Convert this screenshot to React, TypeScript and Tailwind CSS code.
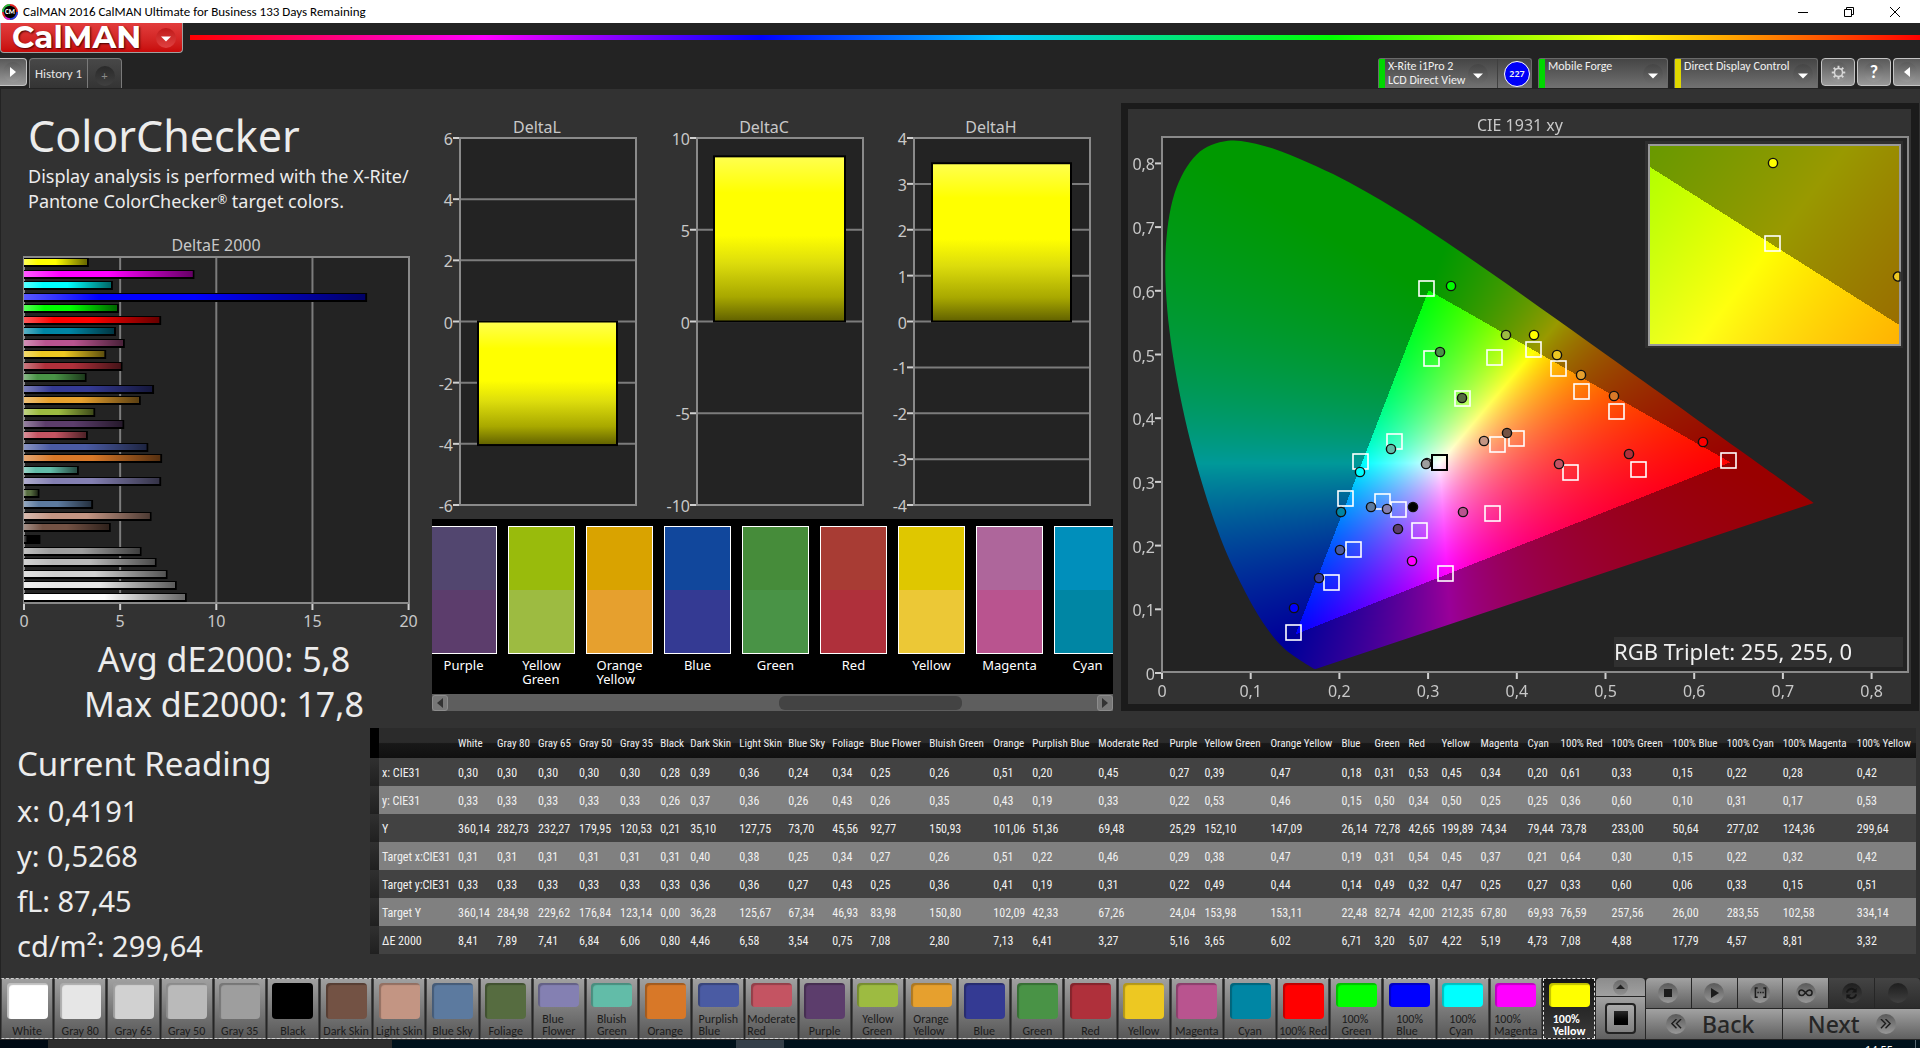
import React, { useEffect, useRef } from "react";

type Swatch = { name: string; color: string; values: string[] };

const ROW_LABELS = ["x: CIE31", "y: CIE31", "Y", "Target x:CIE31", "Target y:CIE31", "Target Y", "ΔE 2000"];

const SWATCHES: Swatch[] = [
  { name: "White", color: "#ffffff", values: ["0,30", "0,33", "360,14", "0,31", "0,33", "360,14", "8,41"] },
  { name: "Gray 80", color: "#e6e6e6", values: ["0,30", "0,33", "282,73", "0,31", "0,33", "284,98", "7,89"] },
  { name: "Gray 65", color: "#d1d1d1", values: ["0,30", "0,33", "232,27", "0,31", "0,33", "229,62", "7,41"] },
  { name: "Gray 50", color: "#bababa", values: ["0,30", "0,33", "179,95", "0,31", "0,33", "176,84", "6,84"] },
  { name: "Gray 35", color: "#9e9e9e", values: ["0,30", "0,33", "120,53", "0,31", "0,33", "123,14", "6,06"] },
  { name: "Black", color: "#000000", values: ["0,28", "0,26", "0,21", "0,31", "0,33", "0,00", "0,80"] },
  { name: "Dark Skin", color: "#735244", values: ["0,39", "0,37", "35,10", "0,40", "0,36", "36,28", "4,46"] },
  { name: "Light Skin", color: "#c39583", values: ["0,36", "0,36", "127,75", "0,38", "0,36", "125,67", "6,58"] },
  { name: "Blue Sky", color: "#5c7a9f", values: ["0,24", "0,26", "73,70", "0,25", "0,27", "67,34", "3,54"] },
  { name: "Foliage", color: "#566c40", values: ["0,34", "0,43", "45,56", "0,34", "0,43", "46,93", "0,75"] },
  { name: "Blue Flower", color: "#8480b2", values: ["0,25", "0,26", "92,77", "0,27", "0,25", "83,98", "7,08"] },
  { name: "Bluish Green", color: "#62bca8", values: ["0,26", "0,35", "150,93", "0,26", "0,36", "150,80", "2,80"] },
  { name: "Orange", color: "#d87828", values: ["0,51", "0,43", "101,06", "0,51", "0,41", "102,09", "7,13"] },
  { name: "Purplish Blue", color: "#4a5ba3", values: ["0,20", "0,19", "51,36", "0,22", "0,19", "42,33", "6,41"] },
  { name: "Moderate Red", color: "#c45462", values: ["0,45", "0,33", "69,48", "0,46", "0,31", "67,26", "3,27"] },
  { name: "Purple", color: "#5c3d6c", values: ["0,27", "0,22", "25,29", "0,29", "0,22", "24,04", "5,16"] },
  { name: "Yellow Green", color: "#9dbb41", values: ["0,39", "0,53", "152,10", "0,38", "0,49", "153,98", "3,65"] },
  { name: "Orange Yellow", color: "#e6a02e", values: ["0,47", "0,46", "147,09", "0,47", "0,44", "153,11", "6,02"] },
  { name: "Blue", color: "#343a93", values: ["0,18", "0,15", "26,14", "0,19", "0,14", "22,48", "6,71"] },
  { name: "Green", color: "#499346", values: ["0,31", "0,50", "72,78", "0,31", "0,49", "82,74", "3,20"] },
  { name: "Red", color: "#af303b", values: ["0,53", "0,34", "42,65", "0,54", "0,32", "42,00", "5,07"] },
  { name: "Yellow", color: "#edc822", values: ["0,45", "0,50", "199,89", "0,45", "0,47", "212,35", "4,22"] },
  { name: "Magenta", color: "#b9548f", values: ["0,34", "0,25", "74,34", "0,37", "0,25", "67,80", "5,19"] },
  { name: "Cyan", color: "#0086a4", values: ["0,20", "0,25", "79,44", "0,21", "0,27", "69,93", "4,73"] },
  { name: "100% Red", color: "#ff0000", values: ["0,61", "0,36", "73,78", "0,64", "0,33", "76,59", "7,08"] },
  { name: "100% Green", color: "#00ff00", values: ["0,33", "0,60", "233,00", "0,30", "0,60", "257,56", "4,88"] },
  { name: "100% Blue", color: "#0000ff", values: ["0,15", "0,10", "50,64", "0,15", "0,06", "26,00", "17,79"] },
  { name: "100% Cyan", color: "#00ffff", values: ["0,22", "0,31", "277,02", "0,22", "0,33", "283,55", "4,57"] },
  { name: "100% Magenta", color: "#ff00ff", values: ["0,28", "0,17", "124,36", "0,32", "0,15", "102,58", "8,81"] },
  { name: "100% Yellow", color: "#ffff00", values: ["0,42", "0,53", "299,64", "0,42", "0,51", "334,14", "3,32"] },
];

const COLUMN_WIDTHS = [
  39, 41, 41, 41, 40, 30, 49, 49, 44, 38, 59, 64, 39, 66, 71, 35, 66, 71, 33, 34, 33, 39, 47, 33, 51, 61, 54, 56, 74, 62,
];

const TWO_LINE = new Set([
  "Blue Flower", "Bluish Green", "Purplish Blue", "Moderate Red", "Yellow Green", "Orange Yellow",
  "100% Green", "100% Blue", "100% Cyan", "100% Magenta", "100% Yellow",
]);

const PATCHES = [
  { lines: ["Purple"], top: "#52466f", bottom: "#5c3d6c" },
  { lines: ["Yellow", "Green"], top: "#99bb0c", bottom: "#9dbb41" },
  { lines: ["Orange", "Yellow"], top: "#d9a300", bottom: "#e6a02e" },
  { lines: ["Blue"], top: "#11479c", bottom: "#343a93" },
  { lines: ["Green"], top: "#468c3a", bottom: "#499346" },
  { lines: ["Red"], top: "#a83c34", bottom: "#af303b" },
  { lines: ["Yellow"], top: "#dfc700", bottom: "#ecc836" },
  { lines: ["Magenta"], top: "#ae669b", bottom: "#b9548f" },
  { lines: ["Cyan"], top: "#008fbb", bottom: "#0086a4" },
];

const AXIS = "fill-[#c8c8c8] text-[16px]";

function DeltaEChart() {
  const x = (v: number) => 24 + v * 19.23;
  const bars = [...SWATCHES].reverse();
  return (
    <svg viewBox="0 232 430 400" className="mt-[18px] block w-full" role="img" aria-label="DeltaE 2000">
      <defs>
        <linearGradient id="shadeH">
          <stop offset="0" stopColor="#fff" stopOpacity=".35" />
          <stop offset=".22" stopColor="#fff" stopOpacity="0" />
          <stop offset=".5" stopColor="#000" stopOpacity="0" />
          <stop offset="1" stopColor="#000" stopOpacity=".6" />
        </linearGradient>
      </defs>
      <text x="216" y="251" textAnchor="middle" className={AXIS}>DeltaE 2000</text>
      <rect x="24" y="257" width="385" height="346" fill="#232323" stroke="#8a8a8a" strokeWidth="2" />
      {[5, 10, 15].map((v) => (
        <line key={v} x1={x(v)} x2={x(v)} y1="258" y2="602" stroke="#7c7c7c" strokeWidth="2" />
      ))}
      {bars.map((s, i) => {
        const w = parseFloat(s.values[6].replace(",", ".")) * 19.23;
        const y = 258 + i * 11.54;
        return (
          <g key={s.name}>
            <rect x="24" y={Math.round(y)} width={w + 1} height="9" fill="#000" />
            <rect x="24" y={Math.round(y) + 1} width={Math.max(w - 1, 1)} height="6" fill={s.color} />
            <rect x="24" y={Math.round(y) + 1} width={Math.max(w - 1, 1)} height="6" fill="url(#shadeH)" />
          </g>
        );
      })}
      {[0, 5, 10, 15, 20].map((v) => (
        <g key={v}>
          <line x1={x(v)} x2={x(v)} y1="604" y2="610" stroke="#d0d0d0" strokeWidth="2" />
          <text x={x(v)} y="627" textAnchor="middle" className={AXIS}>{v}</text>
        </g>
      ))}
    </svg>
  );
}

type DeltaProps = {
  title: string; viewX: number; viewW: number; titleX: number; left: number; right: number;
  min: number; max: number; step: number; value: number; barLeft: number; barRight: number;
};

function DeltaChart(p: DeltaProps) {
  const y = (v: number) => 138 + ((p.max - v) / (p.max - p.min)) * 367;
  const ticks: number[] = [];
  for (let v = p.max; v >= p.min; v -= p.step) ticks.push(v);
  const top = y(Math.max(p.value, 0));
  const bottom = y(Math.min(p.value, 0));
  const id = `shade-${p.title}`;
  return (
    <svg viewBox={`${p.viewX} 110 ${p.viewW} 409`} className="block w-full" role="img" aria-label={p.title}>
      <defs>
        <linearGradient id={id} x1="0" x2="0" y1="0" y2="1">
          <stop offset="0" stopColor="#ffff50" />
          <stop offset=".22" stopColor="#ffff00" />
          <stop offset=".48" stopColor="#ffff00" />
          <stop offset=".65" stopColor="#dcdc0c" />
          <stop offset=".85" stopColor="#a8a800" />
          <stop offset="1" stopColor="#606000" />
        </linearGradient>
      </defs>
      <text x={p.titleX} y="133" textAnchor="middle" className={AXIS}>{p.title}</text>
      <rect x={p.left} y="138" width={p.right - p.left} height="367" fill="#232323" />
      {ticks.map((v) => (
        <g key={v}>
          <line x1={p.left} x2={p.right} y1={y(v)} y2={y(v)} stroke="#7c7c7c" strokeWidth="2" />
          <line x1={p.left - 7} x2={p.left} y1={y(v)} y2={y(v)} stroke="#d0d0d0" strokeWidth="2" />
          <text x={p.left - 7} y={y(v) + 7} textAnchor="end" className={AXIS}>{v}</text>
        </g>
      ))}
      <rect x={p.left} y="138" width={p.right - p.left} height="367" fill="none" stroke="#8a8a8a" strokeWidth="2" />
      <rect x={p.barLeft} y={top} width={p.barRight - p.barLeft} height={bottom - top} fill={`url(#${id})`} stroke="#000" strokeWidth="2" />
    </svg>
  );
}

const LOCUS: [number, number][] = [
  [0.1741, 0.005], [0.1733, 0.0048], [0.1714, 0.0051], [0.1689, 0.0069], [0.1644, 0.0109], [0.1566, 0.0177],
  [0.144, 0.0297], [0.1355, 0.0399], [0.1241, 0.0578], [0.1096, 0.0868], [0.0913, 0.1327], [0.0687, 0.2007],
  [0.0454, 0.295], [0.0235, 0.4127], [0.0082, 0.5384], [0.0039, 0.6548], [0.0139, 0.7502], [0.0389, 0.812],
  [0.0743, 0.8338], [0.1142, 0.8262], [0.1547, 0.8059], [0.1929, 0.7816], [0.2296, 0.7543], [0.2658, 0.7243],
  [0.3016, 0.6923], [0.3373, 0.6589], [0.3731, 0.6245], [0.4087, 0.5896], [0.4441, 0.5547], [0.4788, 0.5202],
  [0.5125, 0.4866], [0.5448, 0.4544], [0.5752, 0.4242], [0.6029, 0.3965], [0.627, 0.3725], [0.6658, 0.334],
  [0.6915, 0.3083], [0.719, 0.2809], [0.7347, 0.2653],
];

const GAMUT: [number, number][] = [[0.64, 0.33], [0.3, 0.6], [0.15, 0.06]];

function insideGamut(x: number, y: number) {
  const side = (a: [number, number], b: [number, number]) =>
    (b[0] - a[0]) * (y - a[1]) - (b[1] - a[1]) * (x - a[0]);
  return side(GAMUT[0], GAMUT[1]) >= 0 && side(GAMUT[1], GAMUT[2]) >= 0 && side(GAMUT[2], GAMUT[0]) >= 0;
}

function chromaColor(x: number, y: number): [number, number, number] {
  const yy = Math.max(y, 0.0001);
  const X = x / yy;
  const Z = (1 - x - yy) / yy;
  const r = Math.max(3.2406 * X - 1.5372 - 0.4986 * Z, 0);
  const g = Math.max(-0.9689 * X + 1.8758 + 0.0415 * Z, 0);
  const b = Math.max(0.0557 * X - 0.204 + 1.057 * Z, 0);
  const k = (insideGamut(x, y) ? 255 : 153) / (Math.max(r, g, b) || 1);
  return [r * k, g * k, b * k];
}

function paintChroma(w: number, h: number, toXY: (px: number, py: number) => [number, number]) {
  const c = document.createElement("canvas");
  c.width = w;
  c.height = h;
  const ctx = c.getContext("2d")!;
  const img = ctx.createImageData(w, h);
  for (let j = 0; j < h; j++) {
    for (let i = 0; i < w; i++) {
      const [x, y] = toXY(i, j);
      const [r, g, b] = chromaColor(x, y);
      const o = (j * w + i) * 4;
      img.data[o] = r;
      img.data[o + 1] = g;
      img.data[o + 2] = b;
      img.data[o + 3] = 255;
    }
  }
  ctx.putImageData(img, 0, 0);
  return c;
}

const TARGETS = [
  [1427, 289], [1432, 359], [1495, 358], [1534, 350], [1463, 399], [1395, 442], [1498, 445], [1517, 439],
  [1361, 462], [1346, 499], [1383, 502], [1399, 510], [1420, 531], [1493, 514], [1354, 550], [1332, 583],
  [1446, 574], [1294, 633], [1559, 369], [1582, 392], [1617, 412], [1571, 473], [1639, 470], [1729, 461],
];

const READINGS: [number, number, string][] = [
  [1451, 286, "#00ff00"], [1506, 335, "#9dbb41"], [1534, 335, "#ffff00"], [1440, 352, "#499346"],
  [1462, 398, "#566c40"], [1507, 433, "#735244"], [1484, 441, "#c39583"], [1391, 449, "#62bca8"],
  [1427, 463, "#e6e6e6"], [1426, 464, "#9e9e9e"], [1360, 472, "#00ffff"], [1341, 512, "#0086a4"],
  [1371, 507, "#5c7a9f"], [1387, 509, "#8480b2"], [1413, 507, "#000000"], [1398, 529, "#5c3d6c"],
  [1463, 512, "#b9548f"], [1340, 550, "#4a5ba3"], [1412, 561, "#ff00ff"], [1319, 578, "#343a93"],
  [1294, 608, "#0000ff"], [1557, 355, "#edc822"], [1581, 375, "#e6a02e"], [1614, 396, "#d87828"],
  [1629, 454, "#af303b"], [1559, 464, "#c15263"], [1703, 442, "#ff0000"],
];

function CieChart() {
  const ref = useRef<HTMLCanvasElement>(null);
  useEffect(() => {
    const ctx = ref.current!.getContext("2d")!;
    const px = (x: number) => 34 + x * 887;
    const py = (y: number) => 563 - y * 637;
    ctx.clearRect(0, 0, 783, 595);
    ctx.fillStyle = "#232323";
    ctx.fillRect(34, 28, 746, 535);
    ctx.save();
    ctx.beginPath();
    ctx.moveTo(px(LOCUS[0][0]), py(LOCUS[0][1]));
    for (let i = 0; i < LOCUS.length - 1; i++) {
      const p0 = LOCUS[Math.max(i - 1, 0)];
      const p1 = LOCUS[i];
      const p2 = LOCUS[i + 1];
      const p3 = LOCUS[Math.min(i + 2, LOCUS.length - 1)];
      ctx.bezierCurveTo(
        px(p1[0] + (p2[0] - p0[0]) / 6), py(p1[1] + (p2[1] - p0[1]) / 6),
        px(p2[0] - (p3[0] - p1[0]) / 6), py(p2[1] - (p3[1] - p1[1]) / 6),
        px(p2[0]), py(p2[1]),
      );
    }
    ctx.closePath();
    ctx.clip();
    ctx.drawImage(paintChroma(783, 595, (i, j) => [(i - 34) / 887, (563 - j) / 637]), 0, 0);
    ctx.restore();
    ctx.fillStyle = "#2e2e2e";
    ctx.fillRect(517, 32, 258, 207);
    ctx.drawImage(
      paintChroma(251, 200, (i, j) => [0.4193 + (i - 123) / 4750, 0.5053 + (99 - j) / 3790]), 521, 36);
  }, []);

  return (
    <div className="relative bg-[#323232]">
      <canvas ref={ref} width={783} height={595} className="absolute inset-0 h-full w-full" />
      <svg viewBox="1128 109 783 595" className="relative block w-full" role="img" aria-label="CIE 1931 xy">
        <text x="1520" y="131" textAnchor="middle" className={AXIS}>CIE 1931 xy</text>
        <rect x="1162" y="137" width="746" height="535" fill="none" stroke="#8a8a8a" strokeWidth="2" />
        {[0, 1, 2, 3, 4, 5, 6, 7, 8].map((n) => (
          <g key={n}>
            <line x1="1155" x2="1161" y1={673 - n * 63.7} y2={673 - n * 63.7} stroke="#d0d0d0" strokeWidth="2" />
            <text x="1155" y={680 - n * 63.7} textAnchor="end" className={AXIS}>{n ? `0,${n}` : "0"}</text>
            <line x1={1162 + n * 88.7} x2={1162 + n * 88.7} y1="673" y2="679" stroke="#d0d0d0" strokeWidth="2" />
            <text x={1162 + n * 88.7} y="697" textAnchor="middle" className={AXIS}>{n ? `0,${n}` : "0"}</text>
          </g>
        ))}
        {TARGETS.map(([x, y]) => (
          <rect key={`${x}-${y}`} x={x - 8} y={y - 8} width="15" height="15" fill="none" stroke="#fff" strokeWidth="1.6" />
        ))}
        {READINGS.map(([x, y, c]) => (
          <circle key={`${x}-${y}`} cx={x} cy={y} r="4.6" fill={c} stroke="#101010" strokeWidth="1.4" />
        ))}
        <rect x="1432" y="455" width="15" height="15" fill="none" stroke="#000" strokeWidth="2" />
        <rect x="1649" y="145" width="251" height="200" fill="none" stroke="#999" strokeWidth="2" />
        <circle cx="1773" cy="163" r="4.6" fill="#ffff00" stroke="#101010" strokeWidth="1.4" />
        <rect x="1765" y="236" width="15" height="15" fill="none" stroke="#fff" strokeWidth="1.6" />
        <path d="M1900 272.4A4.6 4.6 0 1 0 1900 280.6Z" fill="#edc822" stroke="#101010" strokeWidth="1.4" />
        <rect x="1614" y="637" width="289" height="30" fill="#303030" />
        <text x="1614" y="660" className="fill-[#f0f0f0] text-[22px]">RGB Triplet: 255, 255, 0</text>
      </svg>
    </div>
  );
}

function RoundGlyph({ children, dark = false }: { children?: React.ReactNode; dark?: boolean }) {
  return (
    <span
      className={
        dark
          ? "flex size-5 shrink-0 items-center justify-center rounded-full bg-linear-to-b from-[#1e1e1e] to-[#404040]"
          : "flex size-5 shrink-0 items-center justify-center rounded-full bg-linear-to-b from-[#5a5a5a] to-[#989898]"
      }
    >
      {children}
    </span>
  );
}

function DropArrow() {
  return (
    <span className="flex size-5 shrink-0 items-center justify-center rounded-full bg-linear-to-b from-[#454545] to-[#6b6b6b]">
      <svg viewBox="0 0 10 6" className="mt-1 w-[10px]"><path d="M0 .5h10L5 5.5z" fill="#fff" /></svg>
    </span>
  );
}

const PANEL =
  "flex h-[30px] rounded-t-[3px] border-x border-t border-[#6a6a6a] bg-linear-to-b from-[#454545] to-[#727272] text-left text-[12px] leading-[14px] text-[#f0f0f0]";
const TOOL =
  "flex h-[28px] items-center justify-center rounded-[4px] border border-[#c4c4c4] bg-linear-to-b from-[#5a5a5a] to-[#9a9a9a]";
const KEY = "flex items-center justify-center bg-linear-to-b from-[#a2a2a2] to-[#606060]";

export default function App() {
  return (
    <div className="flex min-h-screen flex-col overflow-hidden bg-[#323232] font-['Noto_Sans',sans-serif] text-[#ececec]">
      <header className="bg-[#232323]">
        <div className="flex h-[23px] items-center bg-white pr-0.5 pl-0.5 font-[Carlito,Lato,sans-serif] text-[13px] text-black">
          <svg viewBox="0 0 16 16" className="mr-[5px] size-4">
            <circle cx="8" cy="8" r="7" fill="none" stroke="#e02020" strokeWidth="2" />
            <path d="M8 1a7 7 0 0 0-7 7" fill="none" stroke="#20c040" strokeWidth="2" />
            <path d="M8 15a7 7 0 0 0 7-7" fill="none" stroke="#2040e0" strokeWidth="2" />
            <path d="M8 15a7 7 0 0 1-5-2" fill="none" stroke="#d020d0" strokeWidth="2" />
            <circle cx="8" cy="8" r="6.2" fill="#000" />
            <text x="8" y="10.4" textAnchor="middle" className="fill-white text-[7px] font-bold">CM</text>
          </svg>
          <span className="flex-1">CalMAN 2016 CalMAN Ultimate for Business 133 Days Remaining</span>
          <button aria-label="Minimize" className="flex w-[46px] justify-center">
            <svg viewBox="0 0 10 10" className="size-[10px]"><path d="M0 5.5h10" stroke="#000" /></svg>
          </button>
          <button aria-label="Restore" className="flex w-[46px] justify-center">
            <svg viewBox="0 0 10 10" className="size-[10px]"><path d="M.5 2.5h7v7h-7zM2.5 2.5V.5h7v7h-2" fill="none" stroke="#000" /></svg>
          </button>
          <button aria-label="Close" className="flex w-[46px] justify-center">
            <svg viewBox="0 0 10 10" className="size-[10px]"><path d="M0 0l10 10M10 0L0 10" stroke="#000" /></svg>
          </button>
        </div>

        <div className="flex items-start">
          <button className="flex h-[30px] w-[183px] shrink-0 items-center justify-between rounded-b-[4px] border-x border-b border-[#a0a0a0] bg-linear-to-b from-[#e23c3c] to-[#c80808] pr-1.5 pl-[11px] font-[Montserrat,Lato,sans-serif] text-[31px] leading-none font-bold text-white [text-shadow:1px_1px_2px_#400]">
            CalMAN
            <span className="flex size-5 items-center justify-center rounded-full bg-linear-to-b from-[#c01818] to-[#e04040]">
              <svg viewBox="0 0 10 6" className="mt-0.5 w-[10px]"><path d="M0 .5h10L5 5.5z" fill="#fff" /></svg>
            </span>
          </button>
          <div className="mt-3 ml-[7px] h-[5px] flex-1 bg-[linear-gradient(90deg,#f00,#f0f_17%,#00f_33%,#00c8ff_47%,#0f0_66%,#ff0_83%,#f00)]" />
        </div>

        <div className="flex items-start pt-[5px] pb-px font-[Carlito,Lato,sans-serif]">
          <button aria-label="Open panel" className="flex h-[28px] w-[27px] items-center justify-center rounded-r-[4px] border-y border-r border-[#c4c4c4] bg-linear-to-b from-[#5a5a5a] to-[#9a9a9a]">
            <RoundGlyph><svg viewBox="0 0 6 10" className="h-[10px]"><path d="M0 0l6 5-6 5z" fill="#fff" /></svg></RoundGlyph>
          </button>
          <nav className="ml-[2px] flex h-[30px] rounded-t-[4px] border-x border-t border-[#7a7a7a] bg-linear-to-b from-[#484848] to-[#343434]">
            <button className="w-[58px] border-r border-[#7a7a7a] text-[13px] text-[#e4e4e4]">History 1</button>
            <button aria-label="Add" className="flex w-[33px] items-center justify-center pt-1">
              <span className="flex size-5 items-center justify-center rounded-full bg-linear-to-b from-[#2a2a2a] to-[#404040] text-[12px] leading-none text-[#8a8a8a]">+</span>
            </button>
          </nav>
          <div className="flex-1" />
          <button className={`${PANEL} w-[154px]`}>
            <span className="h-full w-[6px] bg-[#00d800]" />
            <span className="h-full flex-1 pl-[3px] whitespace-nowrap">X-Rite i1Pro 2<br />LCD Direct View</span>
            <span className="flex h-full items-center border-r border-[#404040] pr-[9px]"><DropArrow /></span>
            <span className="flex h-full items-center pr-px pl-[6px]">
              <span className="flex size-[26px] items-center justify-center rounded-full border border-white bg-[#0000f8] font-['Noto_Sans',sans-serif] text-[9px] font-semibold">227</span>
            </span>
          </button>
          <button className={`${PANEL} ml-[6px] w-[130px]`}>
            <span className="h-full w-[6px] bg-[#00d800]" />
            <span className="flex-1 pl-[3px]">Mobile Forge</span>
            <span className="flex h-full items-center pr-1"><DropArrow /></span>
          </button>
          <button className={`${PANEL} ml-[6px] w-[144px]`}>
            <span className="h-full w-[6px] bg-[#e0d800]" />
            <span className="flex-1 pl-[3px] whitespace-nowrap">Direct Display Control</span>
            <span className="flex h-full items-center pr-1"><DropArrow /></span>
          </button>
          <button aria-label="Settings" className={`${TOOL} ml-[3px] w-[34px]`}>
            <RoundGlyph>
              <svg viewBox="-8 -8 16 16" className="size-[15px]" fill="none" stroke="#d8d8d8">
                <circle r="4.3" strokeWidth="1.6" />
                {[0, 45, 90, 135, 180, 225, 270, 315].map((a) => (
                  <path key={a} d="M0-4.8V-7.2" strokeWidth="2" transform={`rotate(${a})`} />
                ))}
              </svg>
            </RoundGlyph>
          </button>
          <button aria-label="Help" className={`${TOOL} ml-[2px] w-[34px] text-[18px] leading-none font-bold text-white`}>
            <RoundGlyph>?</RoundGlyph>
          </button>
          <button aria-label="Collapse" className="ml-[2px] flex h-[28px] w-[27px] items-center justify-center rounded-l-[4px] border-y border-l border-[#c4c4c4] bg-linear-to-b from-[#5a5a5a] to-[#9a9a9a]">
            <RoundGlyph><svg viewBox="0 0 6 10" className="h-[10px]"><path d="M6 0L0 5l6 5z" fill="#fff" /></svg></RoundGlyph>
          </button>
        </div>
      </header>

      <main className="flex-1 border-l border-[#232323]">
        <div className="-ml-px grid grid-cols-[minmax(0,430fr)_minmax(0,690fr)_minmax(0,800fr)] items-start">
          <section>
            <div className="pt-[22px] pl-7">
              <h1 className="text-[43px] leading-[50px]">ColorChecker</h1>
              <p className="mt-[3px] text-[18px] leading-[25px] whitespace-nowrap">
                Display analysis is performed with the X-Rite/<br />
                Pantone ColorChecker<span className="align-[4px] text-[12px] leading-none">®</span> target colors.
              </p>
            </div>
            <DeltaEChart />
            <p className="mt-[5px] pb-px pl-[18px] text-center text-[34px] leading-[45px]">
              Avg dE2000: 5,8<br />Max dE2000: 17,8
            </p>
          </section>

          <section className="pt-[21px]">
            <div className="grid grid-cols-[210fr_230fr_250fr]">
              <DeltaChart title="DeltaL" viewX={430} viewW={210} titleX={537} left={460} right={636} min={-6} max={6} step={2} value={-4.04} barLeft={478} barRight={617} />
              <DeltaChart title="DeltaC" viewX={640} viewW={230} titleX={764} left={697} right={863} min={-10} max={10} step={5} value={9} barLeft={714} barRight={845} />
              <DeltaChart title="DeltaH" viewX={870} viewW={250} titleX={991} left={914} right={1090} min={-4} max={4} step={1} value={3.45} barLeft={932} barRight={1071} />
            </div>
            <div className="mr-[7px] ml-[2px]">
              <div className="h-[175px] overflow-hidden bg-black pt-[7px]">
                <div className="-ml-0.5 flex gap-[11px]">
                  {PATCHES.map((p) => (
                    <figure key={p.lines.join()} className="w-[67px] shrink-0">
                      <div className="h-[128px] border border-white">
                        <div className="h-1/2" style={{ backgroundColor: p.top }} />
                        <div className="h-1/2" style={{ backgroundColor: p.bottom }} />
                      </div>
                      <figcaption className="flex justify-center pt-[4px] text-[13px] leading-[14px] text-white">
                        <span>{p.lines[0]}{p.lines[1] && <><br />{p.lines[1]}</>}</span>
                      </figcaption>
                    </figure>
                  ))}
                </div>
              </div>
              <div className="flex h-[17px] items-center bg-[#5e5e5e]">
                <button aria-label="Scroll left" className="flex size-4 items-center justify-center rounded-[3px] border border-[#8c8c8c] bg-[#777]">
                  <svg viewBox="0 0 6 10" className="h-[10px]"><path d="M6 0L0 5l6 5z" fill="#333" /></svg>
                </button>
                <div className="grid flex-1 grid-cols-[329fr_183fr_134fr]">
                  <div className="col-start-2 h-[14px] rounded-[6px] bg-[#434343]" />
                </div>
                <button aria-label="Scroll right" className="flex size-4 items-center justify-center rounded-[3px] border border-[#8c8c8c] bg-[#777]">
                  <svg viewBox="0 0 6 10" className="h-[10px]"><path d="M0 0l6 5-6 5z" fill="#333" /></svg>
                </button>
              </div>
            </div>
          </section>

          <section className="mx-px mt-[14px] bg-[#1b1b1b] pt-[6px] pr-[8px] pb-[7px] pl-[7px]">
            <CieChart />
          </section>
        </div>

        <div className="flex items-start">
          <section className="w-[369px] shrink-0 pt-[13px] pl-4">
            <h2 className="text-[33px] leading-[45px]">Current Reading</h2>
            <div className="mt-[2px] text-[29px] leading-[45px]">
              {["x: 0,4191", "y: 0,5268", "fL: 87,45", "cd/m²: 299,64"].map((t) => (
                <p key={t}>{t}</p>
              ))}
            </div>
          </section>
          <table className="mr-1 w-0 flex-1 table-fixed border-collapse font-['Roboto_Condensed',Carlito,Roboto,sans-serif] text-[12px] text-[#f0f0f0]">
            <colgroup>
              <col width="9" />
              <col width="76" />
              {COLUMN_WIDTHS.map((w, i) => <col key={i} width={w} />)}
            </colgroup>
            <thead>
              <tr className="h-[30px] bg-[linear-gradient(#2b2b2b,#2b2b2b_48%,#181818_52%,#101010)] text-left text-[11px] whitespace-nowrap">
                <td className="bg-black" />
                <td />
                {SWATCHES.map((s) => <th key={s.name} scope="col" className="pt-[3px] pl-[3px] font-normal">{s.name}</th>)}
              </tr>
            </thead>
            <tbody>
              {ROW_LABELS.map((label, r) => (
                <tr key={label} className={r % 2 ? "h-[28px] bg-[#808080] whitespace-nowrap" : "h-[28px] bg-[#424242] whitespace-nowrap"}>
                  <td className="bg-linear-to-b from-[#303030] to-[#202020]" />
                  <th scope="row" className="pt-[2px] pl-[3px] text-left font-normal">{label}</th>
                  {SWATCHES.map((s) => <td key={s.name} className="pt-[2px] pl-[3px]">{s.values[r]}</td>)}
                </tr>
              ))}
            </tbody>
          </table>
        </div>
      </main>

      <footer className="bg-[#262626]">
        <div className="flex h-[62px] pb-px pl-px">
          <div className="flex min-w-0 flex-1 font-[Carlito,Lato,sans-serif] text-[12px] leading-[12px]">
            {SWATCHES.map((s, i) => {
              const two = TWO_LINE.has(s.name);
              const selected = i === SWATCHES.length - 1;
              const [first, second] = s.name.split(" ");
              return (
                <button
                  key={s.name}
                  className={
                    selected
                      ? "mr-px flex min-w-0 flex-1 flex-col items-center justify-between border border-dashed border-[#e0e0e0] bg-linear-to-b from-[#161616] to-[#3a3a3a] pt-[4px] pb-px font-bold text-white"
                      : "mr-px flex min-w-0 flex-1 flex-col items-center justify-between border border-x-[#444] border-y-[#d0d0d0] [border-top-style:dashed] [border-bottom-style:dashed] bg-linear-to-b from-[#a0a0a0] to-[#585858] pt-[4px] pb-px text-[#1c1c1c]"
                  }
                >
                  <span
                    className={
                      two
                        ? "h-[24px] w-[41px] rounded-[4px] shadow-[inset_2px_2px_1px_rgba(0,0,0,0.25)]"
                        : "h-[36px] w-[41px] rounded-[4px] shadow-[inset_2px_2px_1px_rgba(0,0,0,0.25)]"
                    }
                    style={{ backgroundColor: s.color }}
                  />
                  <span className="text-left whitespace-nowrap">{two ? <>{first}<br />{second}</> : s.name}</span>
                </button>
              );
            })}
          </div>
          <div className="mr-px flex w-[49px] flex-col gap-px">
            <button aria-label="Expand" className="flex h-[18px] items-center justify-center rounded-t-[4px] bg-linear-to-b from-[#8c8c8c] to-[#a0a0a0]">
              <span className="flex size-[15px] items-center justify-center rounded-full bg-linear-to-b from-[#6a6a6a] to-[#909090]">
                <svg viewBox="0 0 10 6" className="w-[9px]"><path d="M0 5.5h10L5 .5z" fill="#222" /></svg>
              </span>
            </button>
            <button aria-label="Pattern window" className={`${KEY} flex-1`}>
              <span className="flex size-[31px] items-center justify-center rounded-[4px] border-2 border-[#222] bg-linear-to-b from-[#aaa] to-[#808080]">
                <span className="size-[14px] bg-linear-to-b from-[#2a2a2a] to-black" />
              </span>
            </button>
          </div>
          <div className="grid w-[274px] grid-cols-6 grid-rows-2 gap-px">
            <button aria-label="Stop" className={`${KEY} rounded-tl-[4px]`}>
              <RoundGlyph><span className="size-2 bg-[#1c1c1c]" /></RoundGlyph>
            </button>
            <button aria-label="Play" className={KEY}>
              <RoundGlyph><svg viewBox="0 0 8 10" className="ml-0.5 h-[10px]"><path d="M0 0l8 5-8 5z" fill="#1c1c1c" /></svg></RoundGlyph>
            </button>
            <button aria-label="Read series" className={KEY}>
              <RoundGlyph>
                <svg viewBox="0 0 14 12" className="w-[13px]" fill="none" stroke="#1c1c1c" strokeWidth="1.6">
                  <path d="M4 1H1.500v10H4M10 1h2.500v10H10" /><path d="M3.600 6h7" strokeDasharray="1.600 1.100" />
                </svg>
              </RoundGlyph>
            </button>
            <button aria-label="Read continuously" className={KEY}>
              <RoundGlyph>
                <svg viewBox="0 0 16 8" className="w-[15px]" fill="none" stroke="#1c1c1c" strokeWidth="1.6">
                  <path d="M8 4C6.500 2 5.500 1 4 1a3 3 0 0 0 0 6c1.500 0 2.500-1 4-3s2.500-3 4-3a3 3 0 0 1 0 6c-1.500 0-2.500-1-4-3z" />
                </svg>
              </RoundGlyph>
            </button>
            <button aria-label="Refresh" className="flex items-center justify-center bg-linear-to-b from-[#444] to-[#2c2c2c]">
              <RoundGlyph dark>
                <svg viewBox="0 0 14 14" className="w-[13px]" fill="none" stroke="#161616" strokeWidth="2">
                  <path d="M2 6a5 5 0 0 1 8.500-2.500M12 8a5 5 0 0 1-8.500 2.500" /><path d="M12.500 1v5h-5zM1.500 13V8h5z" fill="#161616" stroke="none" />
                </svg>
              </RoundGlyph>
            </button>
            <button aria-label="Record" className="flex items-center justify-center rounded-tr-[4px] bg-linear-to-b from-[#444] to-[#2c2c2c]">
              <RoundGlyph dark />
            </button>
            <button className={`${KEY} col-span-3 gap-4 pr-2 text-[23px] leading-none font-medium text-[#262626]`}>
              <RoundGlyph>
                <svg viewBox="0 0 12 10" className="w-[11px]" fill="none" stroke="#1c1c1c" strokeWidth="1.5"><path d="M6 0L1 5l5 5M11 0L6 5l5 5" /></svg>
              </RoundGlyph>
              Back
            </button>
            <button className={`${KEY} col-span-3 gap-4 text-[23px] leading-none font-medium text-[#262626]`}>
              Next
              <RoundGlyph>
                <svg viewBox="0 0 12 10" className="w-[11px]" fill="none" stroke="#1c1c1c" strokeWidth="1.5"><path d="M1 0l5 5-5 5M6 0l5 5-5 5" /></svg>
              </RoundGlyph>
            </button>
          </div>
        </div>
        <div className="flex h-2 overflow-hidden bg-[#00121c]">
          <div className="w-[48px] bg-[#000a14]" />
          <div className="w-[344px] bg-[#2c2c2c]" />
          <div className="w-[344px]" />
          <div className="w-[48px] bg-[#343f49]" />
          <div className="flex-1" />
          <time className="mt-[3px] mr-[22px] text-[11px] leading-[14px] text-white">14:55</time>
          <div className="mr-1 w-px bg-[#5a6a74]" />
        </div>
      </footer>
    </div>
  );
}
